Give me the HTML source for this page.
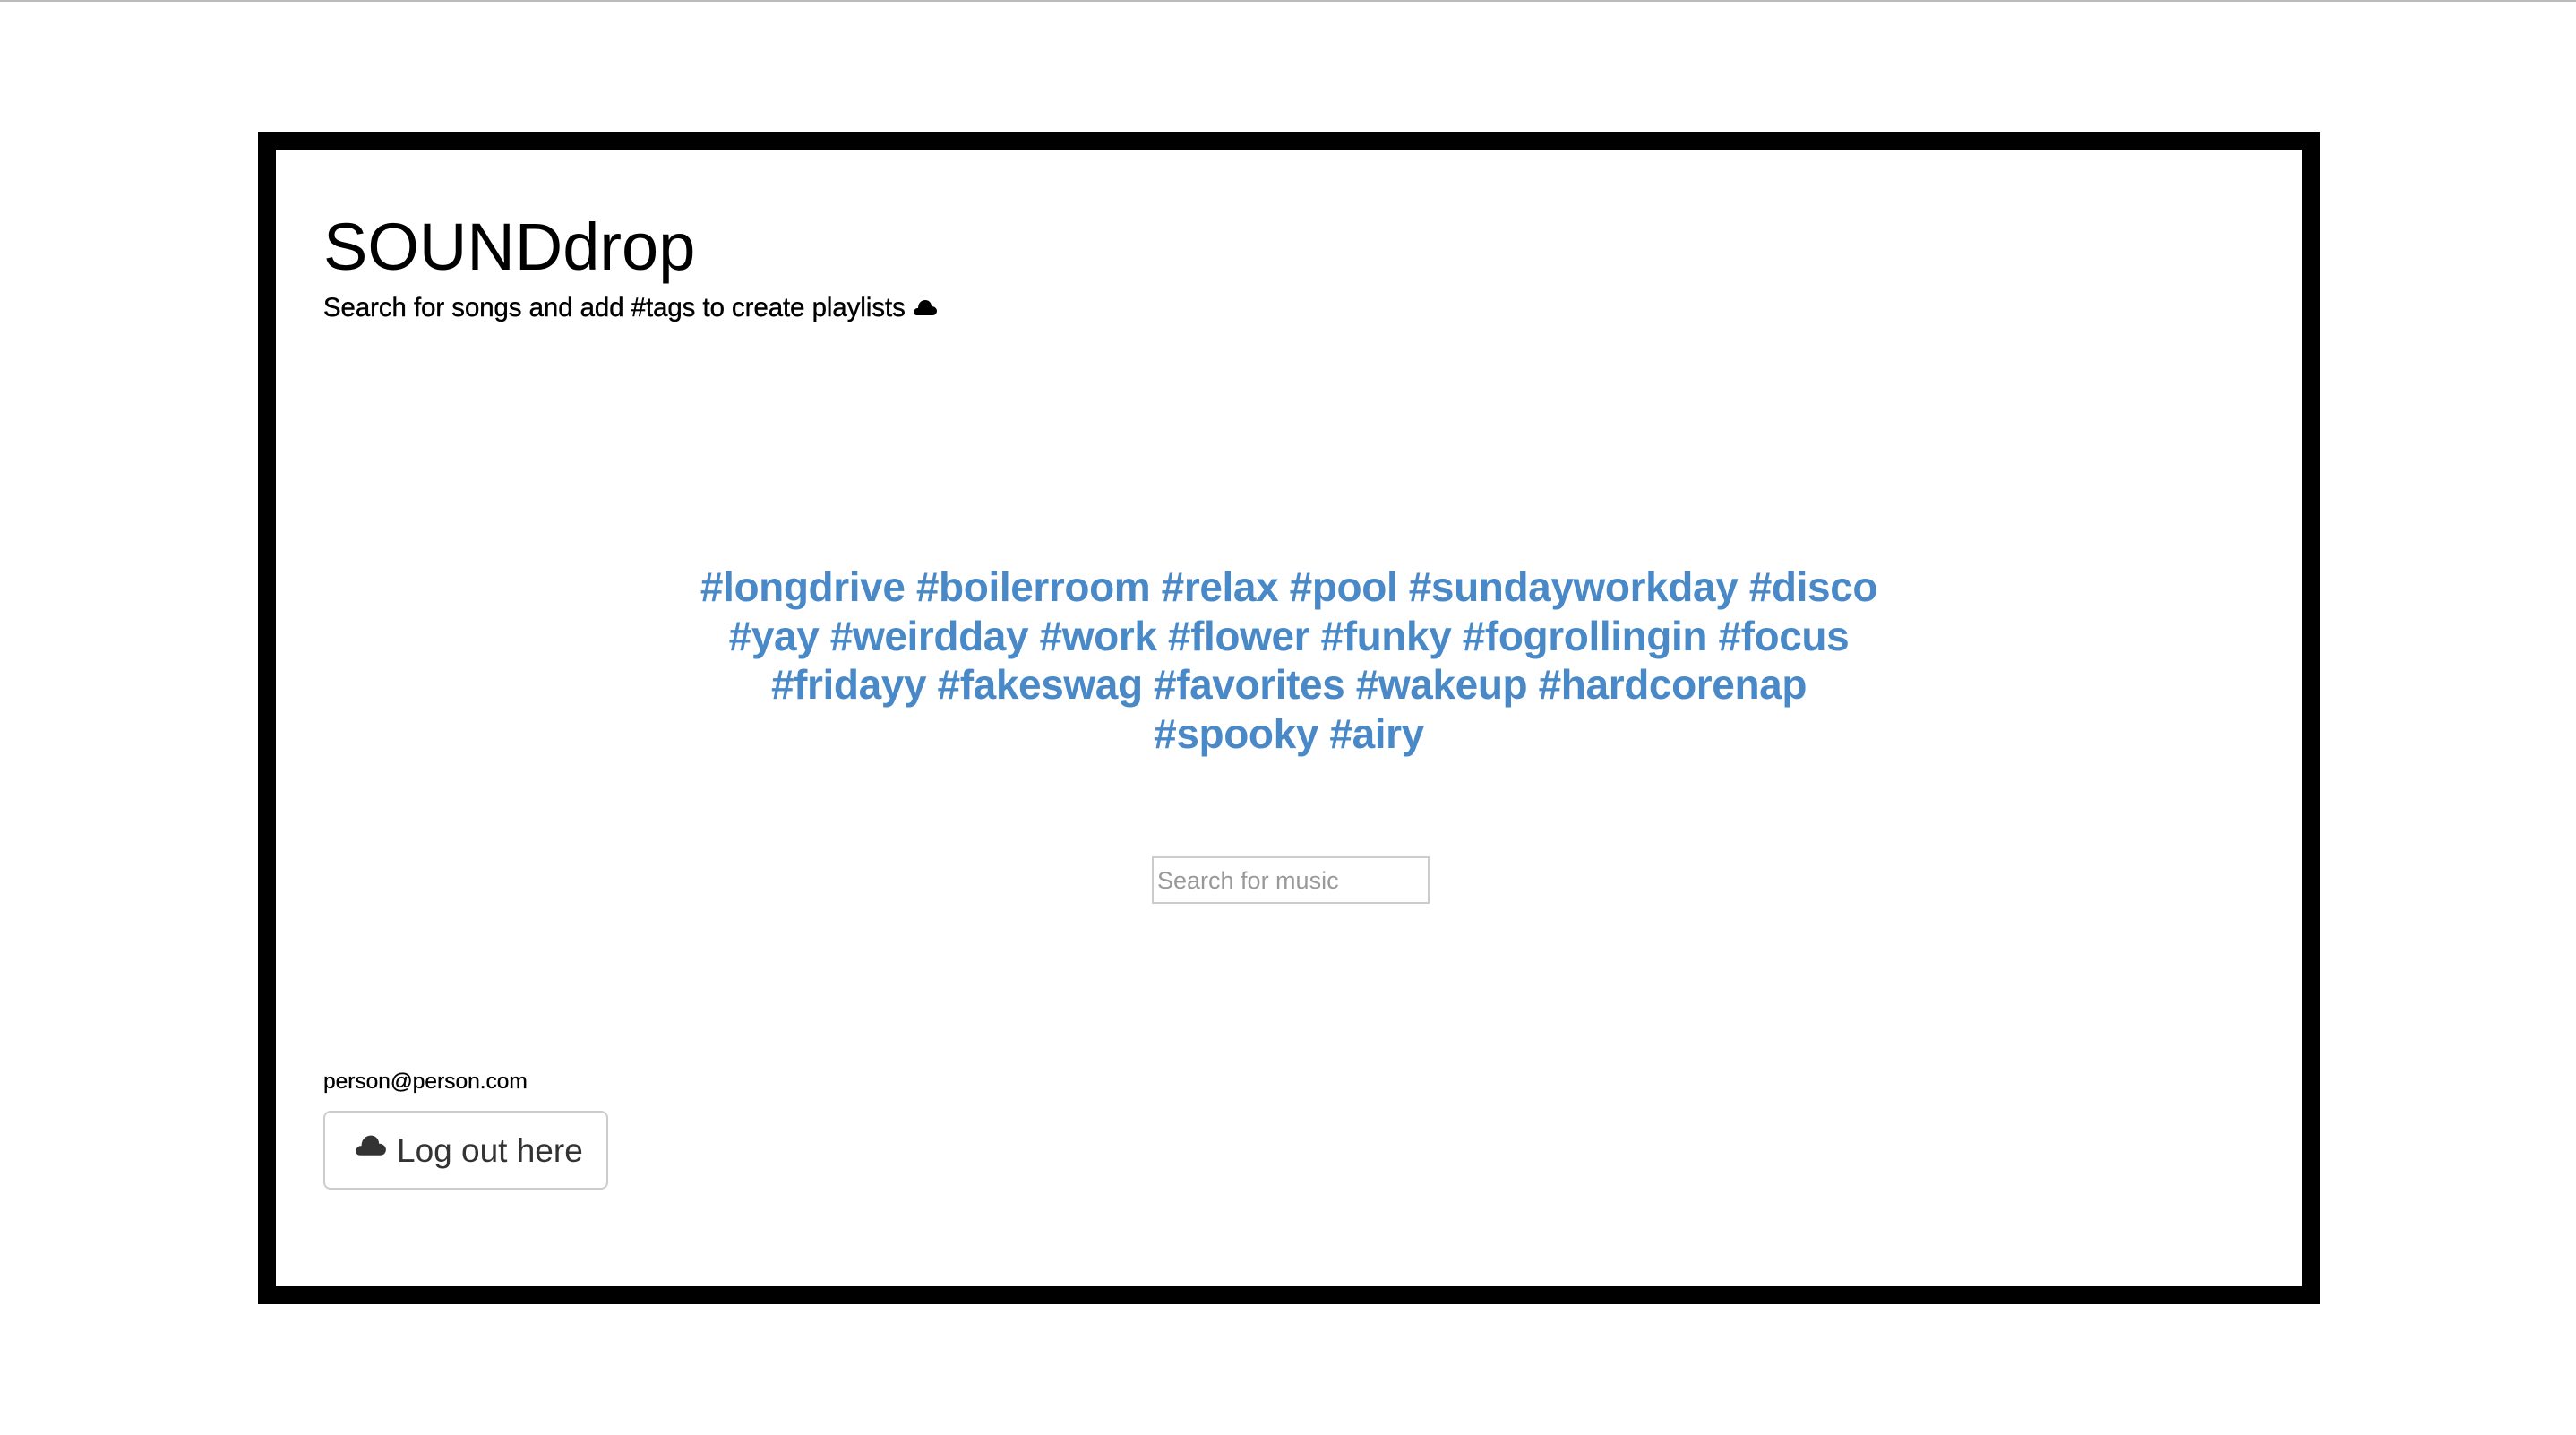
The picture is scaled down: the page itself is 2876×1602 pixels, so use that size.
<!DOCTYPE html>
<html><head><meta charset="utf-8"><style>
html,body{margin:0;padding:0;background:#fff;}
body{width:2876px;height:1602px;position:relative;overflow:hidden;font-family:"Liberation Sans",Arial,sans-serif;}
.topline{position:absolute;left:0;top:0;width:2876px;height:2px;background:#bbb;}
.frame{position:absolute;left:288px;top:147px;width:2262px;height:1269px;border:20px solid #000;}
.title{position:absolute;left:361px;top:231px;font-size:74px;line-height:90px;color:#000;margin:0;font-weight:normal;}
.sub{position:absolute;left:361px;top:327px;font-size:29.3px;line-height:34px;color:#000;white-space:nowrap;-webkit-text-stroke:0.4px #000;}
.sub svg{position:relative;display:inline-block;vertical-align:baseline;margin-left:8px;}
.tags{position:absolute;left:288px;width:2302px;top:628px;text-align:center;font-size:46px;line-height:54.5px;font-weight:bold;color:#4a89c8;letter-spacing:-0.4px;}
.search{position:absolute;left:1286px;top:956px;width:306px;height:49px;border:2px solid #ccc;box-sizing:content-box;}
.search span{position:absolute;left:4px;top:10px;font-size:27px;color:#999;line-height:30px;}
.email{position:absolute;left:361px;top:1194px;font-size:24.5px;line-height:28px;color:#000;-webkit-text-stroke:0.3px #000;}
.btn{position:absolute;left:361px;top:1240px;width:314px;height:84px;border:2px solid #ccc;border-radius:8px;}
.btn span{position:absolute;left:80px;top:22px;font-size:37px;line-height:42px;color:#333;white-space:nowrap;}
svg.abs{position:absolute;}
</style></head><body>
<div class="topline"></div>
<div class="frame"></div>
<h1 class="title">SOUNDdrop</h1>
<div class="sub">Search for songs and add #tags to create playlists<svg width="28" height="20" viewBox="0 0 28 20"><path d="M5 19 C1 19 0 15 2 13 C3 11 5 11 6 11 C6 5 10 2 14 2 C18 2 21 5 21 9 C25 9 27 12 27 14 C27 17 25 19 22 19 Z" fill="#000"/></svg></div>
<div class="tags">#longdrive #boilerroom #relax #pool #sundayworkday #disco<br>#yay #weirdday #work #flower #funky #fogrollingin #focus<br>#fridayy #fakeswag #favorites #wakeup #hardcorenap<br>#spooky #airy</div>
<div class="search"><span>Search for music</span></div>
<div class="email">person@person.com</div>
<div class="btn"><span>Log out here</span></div>
<svg class="abs" style="left:395px;top:1265px" width="38" height="26" viewBox="0 0 28 20"><path d="M5 19 C1 19 0 15 2 13 C3 11 5 11 6 11 C6 5 10 2 14 2 C18 2 21 5 21 9 C25 9 27 12 27 14 C27 17 25 19 22 19 Z" fill="#333"/></svg>
</body></html>
